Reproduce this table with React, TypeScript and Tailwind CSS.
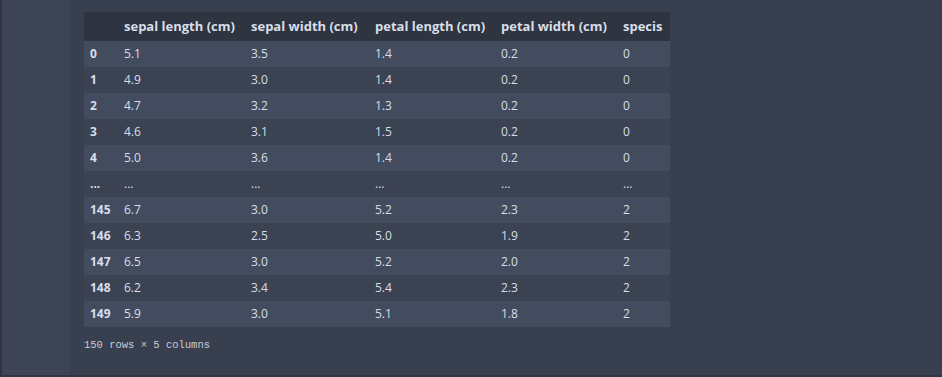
const columns = ["sepal length (cm)", "sepal width (cm)", "petal length (cm)", "petal width (cm)", "specis"];

const rows: string[][] = [
  ["0", "5.1", "3.5", "1.4", "0.2", "0"],
  ["1", "4.9", "3.0", "1.4", "0.2", "0"],
  ["2", "4.7", "3.2", "1.3", "0.2", "0"],
  ["3", "4.6", "3.1", "1.5", "0.2", "0"],
  ["4", "5.0", "3.6", "1.4", "0.2", "0"],
  ["...", "...", "...", "...", "...", "..."],
  ["145", "6.7", "3.0", "5.2", "2.3", "2"],
  ["146", "6.3", "2.5", "5.0", "1.9", "2"],
  ["147", "6.5", "3.0", "5.2", "2.0", "2"],
  ["148", "6.2", "3.4", "5.4", "2.3", "2"],
  ["149", "5.9", "3.0", "5.1", "1.8", "2"],
];

export default function App() {
  return (
    <div className="flex h-[377px] w-[942px] overflow-hidden border-b-2 border-[#2e3440] bg-[#383f4e] font-['Open_Sans',sans-serif] text-[#d8dee9]">
      <div className="w-[70px] shrink-0 border-l-2 border-[#2e3440] bg-[#3d4456]" />
      <div className="flex-1 pl-[14px] pt-[12px]">
        <table className="table-fixed border-collapse text-left">
          <colgroup>
            <col className="w-[34px]" />
            <col className="w-[127px]" />
            <col className="w-[124px]" />
            <col className="w-[126px]" />
            <col className="w-[122px]" />
            <col className="w-[53px]" />
          </colgroup>
          <thead>
            <tr className="h-[29px] bg-[#2e3440]">
              <th />
              {columns.map((c) => (
                <th key={c} className="whitespace-nowrap px-[6px] text-[13px] font-bold">
                  {c}
                </th>
              ))}
            </tr>
          </thead>
          <tbody>
            {rows.map((r, i) => (
              <tr key={r[0]} className={i % 2 === 0 ? "h-[26px] bg-[#434c5e]" : "h-[26px] bg-[#3b4252]"}>
                <th className="px-[6px] text-[12px] font-bold">{r[0]}</th>
                {r.slice(1).map((v, j) => (
                  <td key={j} className="px-[6px] text-[12px]">
                    {v}
                  </td>
                ))}
              </tr>
            ))}
          </tbody>
        </table>
        <div className="mt-[11px] font-['Liberation_Mono',monospace] text-[10.5px] text-[#c5cddb]">
          150 rows × 5 columns
        </div>
      </div>
    </div>
  );
}
